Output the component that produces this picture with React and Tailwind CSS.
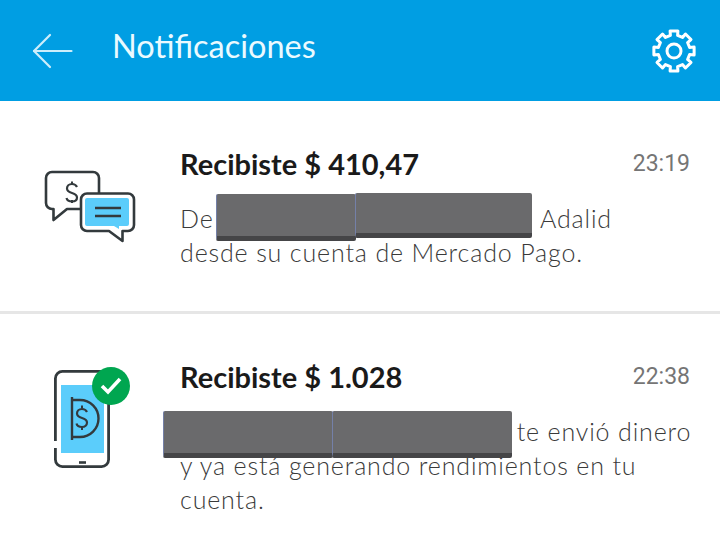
import React from 'react';

// Engranaje de 8 dientes, generado para no escribir los puntos a mano
const gearPath = () => {
  const pt = (deg, r) => {
    const a = (deg * Math.PI) / 180;
    return `${(22 + r * Math.cos(a)).toFixed(2)} ${(22 + r * Math.sin(a)).toFixed(2)}`;
  };
  const parts = [];
  for (let i = 0; i < 8; i++) {
    const a = i * 45 - 90;
    parts.push(pt(a - 13, 16), pt(a - 11, 20.5), pt(a + 11, 20.5), pt(a + 13, 16));
  }
  return 'M' + parts.join('L') + 'Z';
};

// Barra azul con flecha, titulo y engranaje
const Header = () => (
  <div className="h-[101px] bg-[#009ee3] flex items-center pl-[32px] pr-[24px] shrink-0">
    <svg width="41" height="36" viewBox="0 0 41 36" fill="none" stroke="#cdeefb" strokeWidth="2.2" strokeLinecap="round" strokeLinejoin="round">
      <path d="M39.500 18H2" />
      <path d="M18 2L2 18l16 16" />
    </svg>
    <h1 className="ml-[39px] mb-[9px] text-[32.500px] leading-none text-[#eafaff] font-[Lato,sans-serif]">Notificaciones</h1>
    <svg className="ml-auto" width="44" height="44" viewBox="0 0 44 44" fill="none" stroke="#ffffff" strokeWidth="3" strokeLinejoin="round">
      <path d={gearPath()} />
      <circle cx="22" cy="22" r="7" strokeWidth="3" />
    </svg>
  </div>
);

const ChatIcon = () => (
  <svg width="92" height="74" viewBox="0 0 92 74" fill="none" stroke="#333a3d" strokeWidth="2.6" strokeLinejoin="round">
    <path d="M36 39H23L9.500 50V39H8a6 6 0 0 1-6-6V8a6 6 0 0 1 6-6h41a6 6 0 0 1 6 6v15" />
    <path d="M28 11.500v3M28 30v3" strokeWidth="2" />
    <path d="M33 17c-1-2-3-3-5-3-3 0-5 2-5 4.500 0 6 10 3 10 9 0 2.500-2 4-5 4-3 0-5-1.500-5.500-3.500" strokeWidth="2.200" />
    <path d="M43 23.500h41a6 6 0 0 1 6 6V55a6 6 0 0 1-6 6h-5.500v10L65 61H43a6 6 0 0 1-6-6V29.500a6 6 0 0 1 6-6z" fill="#fff" />
    <path d="M43 28h40a2 2 0 0 1 2 2v24a2 2 0 0 1-2 2h-8v3l-5-3H43a2 2 0 0 1-2-2V30a2 2 0 0 1 2-2z" fill="#5bcdfb" stroke="none" />
    <path d="M51 38h26M51 46h26" strokeWidth="2.400" />
  </svg>
);

const PhoneIcon = () => (
  <div className="relative w-[78px] h-[102px]">
    <svg width="78" height="102" viewBox="0 0 78 102" fill="none" stroke="#333a3d" strokeWidth="2.800" strokeLinejoin="round">
      <rect x="3.400" y="4.400" width="53.200" height="95.200" rx="7" fill="#fff" />
      <rect x="9" y="18" width="43" height="68" fill="#5bcdfb" stroke="none" />
      <path d="M3.400 74v7" stroke="#fff" strokeWidth="4" />
      <path d="M20 30v43" strokeWidth="2.400" />
      <path d="M20 33h8a18.500 18.500 0 0 1 0 37h-8" strokeWidth="2.400" />
      <path d="M30 38.500v3M30 60v3" strokeWidth="2" />
      <path d="M35 45c-1-2-3-3-5-3-3 0-5 2-5 4.500 0 6 10 3 10 9 0 2.500-2 4.500-5 4.500-3 0-5-1.500-5.500-3.500" strokeWidth="2.200" />
      <path d="M27 95.500h7" strokeWidth="2.600" />
    </svg>
    <div className="absolute left-[40px] top-0 w-[38px] h-[38px] rounded-full bg-[#00a650] flex items-center justify-center">
      <svg width="24" height="20" viewBox="0 0 24 20" fill="none" stroke="#fff" strokeWidth="3.600">
        <path d="M3 10l6 6L21 3" />
      </svg>
    </div>
  </div>
);

// Bloque gris que tapa el nombre en la captura
const Redaction = ({ className }) => (
  <div className={`absolute bg-[#6a6a6c] border-b-[5px] border-b-[#454547] border-l border-l-[#7480a8] rounded-[2px] ${className}`} />
);

const Row = ({ icon, iconClass, title, time, children, height }) => (
  <div className={`flex ${height}`}>
    <div className={`w-[180px] shrink-0 ${iconClass}`}>{icon}</div>
    <div className="flex-1 min-w-0 pr-[30px]">
      <div className="flex justify-between items-start">
        <h2 className="text-[29px] leading-[32px] font-bold text-[#1a1a1a] font-[Lato,sans-serif]">{title}</h2>
        <span className="pt-[2px] text-[23px] leading-[28px] text-[#757575] font-[Roboto,sans-serif]">{time}</span>
      </div>
      <p className="mt-[21px] text-[25px] leading-[34px] font-light tracking-[0.85px] whitespace-nowrap text-[#3a3a3a] font-[Lato,sans-serif]">{children}</p>
    </div>
  </div>
);

export default function App() {
  return (
    <div className="relative w-[720px] h-[554px] overflow-hidden bg-white flex flex-col">
      <Header />
      <Row
        height="h-[210px] pt-[47px]"
        iconClass="pl-[44px] pt-[22px]"
        icon={<ChatIcon />}
        title="Recibiste $ 410,47"
        time="23:19"
      >
        De <span className="inline-block w-[312px]" /> Adalid
        <br />
        desde su cuenta de Mercado Pago.
      </Row>
      <div className="h-[3px] bg-[#e6e6e6] shrink-0" />
      <Row
        height="flex-1 pt-[47px]"
        iconClass="pl-[52px] pt-[6px]"
        icon={<PhoneIcon />}
        title="Recibiste $ 1.028"
        time="22:38"
      >
        <span className="inline-block w-[329px]" /> te envió dinero
        <br />
        y ya está generando rendimientos en tu
        <br />
        cuenta.
      </Row>
      <Redaction className="left-[216px] top-[194px] w-[140px] h-[47px]" />
      <Redaction className="left-[355px] top-[193px] w-[177px] h-[45px]" />
      <Redaction className="left-[163px] top-[411px] w-[170px] h-[47px]" />
      <Redaction className="left-[332px] top-[411px] w-[180px] h-[47px]" />
    </div>
  );
}
